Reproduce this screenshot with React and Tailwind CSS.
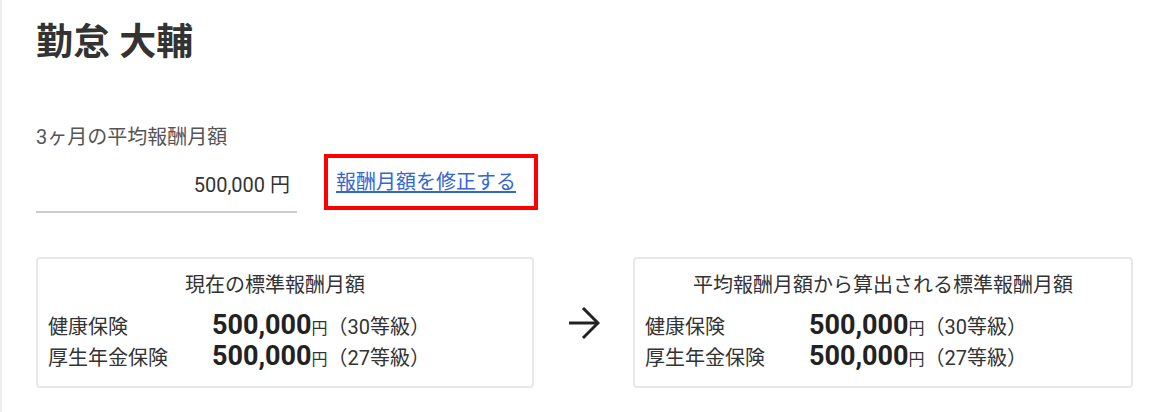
import React from 'react';

const rows = [
  { label: '健康保険', grade: '30' },
  { label: '厚生年金保険', grade: '27' },
];

const AmountCard = ({ title, width, titlePad }) => (
  <div className={`${width} h-[131px] border-2 border-[#e8e8e8] rounded-[4px] pt-[12px] px-[10px]`}>
    <div className={`text-center text-[20px] leading-[28px] text-[#333] ${titlePad}`}>{title}</div>
    <div className="mt-[11px]">
      {rows.map((r) => (
        <div key={r.label} className="flex items-baseline h-[31px] text-[#333]">
          <span className="w-[164px] text-[20px]">{r.label}</span>
          <span className="text-[27px] font-bold text-[#222] leading-[31px]">500,000</span>
          <span className="text-[16px]">円</span>
          <span className="text-[20px]">（{r.grade}等級）</span>
        </div>
      ))}
    </div>
  </div>
);

export default function App() {
  return (
    <div
      className="min-h-[412px] bg-white border-l-2 border-[#eeeeee] pl-[34px] pt-[21px]"
      style={{ fontFamily: 'Roboto, "Noto Sans CJK JP", sans-serif' }}
    >
      <h1 className="text-[37px] leading-[44px] font-bold text-[#333]">勤怠 大輔</h1>

      <div className="mt-[60px] text-[20px] leading-[24px] text-[#555]">3ヶ月の平均報酬月額</div>

      <div className="flex items-start mt-[5px]">
        <div className="mt-[5px] w-[261px] h-[54px] flex items-center justify-end pr-[7px] border-b-2 border-[#cccccc] text-[20px] text-[#333]">
          500,000 円
        </div>
        <div className="ml-[27px] w-[214px] h-[56px] border-4 border-[#ff0000] flex items-center pl-[8px]">
          <a href="#" className="text-[20px] text-[#3367d6] underline underline-offset-2">
            報酬月額を修正する
          </a>
        </div>
      </div>

      <div className="flex items-center mt-[44px]">
        <AmountCard title="現在の標準報酬月額" width="w-[498px]" titlePad="pr-[20px]" />
        <div className="w-[99px] flex justify-center">
          <svg width="32" height="34" viewBox="0 0 32 34" fill="none" stroke="#222" strokeWidth="3">
            <path d="M1 17H30" />
            <path d="M15 2L30 17L15 32" />
          </svg>
        </div>
        <AmountCard title="平均報酬月額から算出される標準報酬月額" width="w-[500px]" titlePad="" />
      </div>
    </div>
  );
}
